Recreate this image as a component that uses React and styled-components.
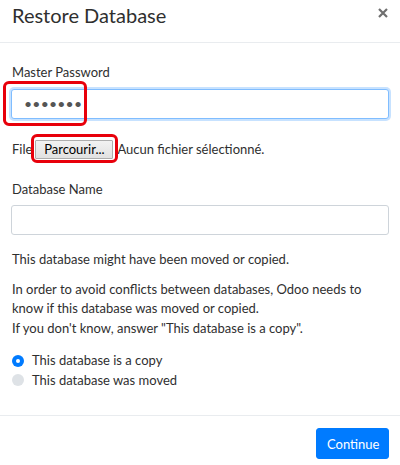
import React from "react";
import styled, { createGlobalStyle } from "styled-components";

const Global = createGlobalStyle`
  html, body { margin: 0; padding: 0; background: #fff; }
  body { font-family: Lato, "Noto Sans", sans-serif; color: #2f2f2f; font-size: 13px; line-height: 1.5; }
  * { box-sizing: border-box; }
`;

const Modal = styled.div`
  width: 400px;
  height: 465px;
  background: #fff;
  display: flex;
  flex-direction: column;
  overflow: hidden;
`;

const Header = styled.div`
  display: flex;
  align-items: flex-start;
  justify-content: space-between;
  padding: 0 12px;
  border-bottom: 1px solid #e9ecef;
  height: 43px;
`;

const Title = styled.h4`
  margin: 0;
  font-size: 20px;
  font-weight: 400;
  line-height: 31px;
  color: #2f2f2f;
`;

const Close = styled.button`
  border: 0;
  background: none;
  padding: 0;
  margin: 8px 0 0 0;
  width: 10px;
  height: 10px;
  display: flex;
  cursor: pointer;
`;

const Body = styled.div`
  padding: 20px 11px 0 11px;
  display: flex;
  flex-direction: column;
`;

const Label = styled.label`
  display: block;
  padding-left: 1px;
  margin-bottom: 6px;
`;

const FieldGroup = styled.div`
  margin-bottom: ${(p) => p.$mb || 12}px;
  position: relative;
`;

const Input = styled.input`
  display: block;
  width: 100%;
  height: 30px;
  padding: 0 ${(p) => (p.type === "password" ? "12px" : "10px")};
  font-family: inherit;
  font-size: ${(p) => (p.type === "password" ? "14px" : "13px")};
  color: #555;
  background: #fff;
  border: 1px solid ${(p) => (p.$focus ? "#80bdff" : "#ced4da")};
  border-radius: 3px;
  box-shadow: ${(p) => (p.$focus ? "0 0 0 2px rgba(0,123,255,.22)" : "none")};
  outline: none;
  letter-spacing: ${(p) => (p.type === "password" ? "0.2px" : "normal")};
`;

const Highlight = styled.div`
  position: absolute;
  border: 3px solid #e8000b;
  border-radius: 6px;
  pointer-events: none;
  left: ${(p) => p.$l}px;
  top: ${(p) => p.$t}px;
  width: ${(p) => p.$w}px;
  height: ${(p) => p.$h}px;
`;

const FileRow = styled.div`
  display: flex;
  align-items: center;
  padding-left: 1px;
  height: 20px;
  position: relative;
  margin-bottom: 20px;
`;

const FileButton = styled.span`
  display: inline-flex;
  align-items: center;
  justify-content: center;
  height: 19px;
  width: 78px;
  margin: 0 4px 0 3px;
  padding: 0 4px;
  font-family: inherit;
  font-size: 13px;
  color: #000;
  background: linear-gradient(#f2f2f2, #e1e1e1);
  border: 1px solid #adadad;
  border-radius: 1px;
`;

const Text = styled.p`
  margin: 0 0 ${(p) => p.$mb ?? 10}px 1px;
`;

const RadioList = styled.div`
  display: flex;
  flex-direction: column;
  padding-left: 1px;
`;

const RadioRow = styled.label`
  display: flex;
  align-items: center;
  gap: 8px;
  height: 19.5px;
`;

const RadioDot = styled.span`
  width: 12px;
  height: 12px;
  border-radius: 50%;
  flex: none;
  background: ${(p) => (p.$on ? "#007bff" : "#dee2e6")};
  display: flex;
  align-items: center;
  justify-content: center;
  &::after {
    content: "";
    width: 4px;
    height: 4px;
    border-radius: 50%;
    background: ${(p) => (p.$on ? "#fff" : "transparent")};
  }
`;

const Footer = styled.div`
  margin-top: auto;
  border-top: 1px solid #e9ecef;
  padding: 12px 11px 0 11px;
  display: flex;
  justify-content: flex-end;
  height: 50px;
`;

const Button = styled.button`
  height: 31px;
  width: 73px;
  padding: 0 10px;
  font-family: inherit;
  font-size: 13px;
  color: #fff;
  background: #007bff;
  border: 1px solid #007bff;
  border-radius: 3px;
`;

export default function App() {
  return (
    <>
      <Global />
      <Modal>
        <Header>
          <Title>Restore Database</Title>
          <Close aria-label="Close">
            <svg width="10" height="10" viewBox="0 0 10 10">
              <path d="M1 1 L9 9 M9 1 L1 9" stroke="#6f6f6f" strokeWidth="2.2" strokeLinecap="butt" />
            </svg>
          </Close>
        </Header>
        <Body>
          <Label>Master Password</Label>
          <FieldGroup $mb={21}>
            <Input type="password" defaultValue="1234567" $focus readOnly />
            <Highlight $l={-8} $t={-8} $w={84} $h={45} />
          </FieldGroup>
          <FileRow>
            File
            <FileButton>Parcourir...</FileButton>
            Aucun fichier sélectionné.
            <Highlight $l={20} $t={-6} $w={87} $h={29} />
          </FileRow>
          <Label>Database Name</Label>
          <FieldGroup $mb={15}>
            <Input type="text" />
          </FieldGroup>
          <Text>This database might have been moved or copied.</Text>
          <Text $mb={13}>
            In order to avoid conflicts between databases, Odoo needs to know if this database was moved or copied.
            <br />
            If you don't know, answer "This database is a copy".
          </Text>
          <RadioList>
            <RadioRow>
              <RadioDot $on />
              This database is a copy
            </RadioRow>
            <RadioRow>
              <RadioDot />
              This database was moved
            </RadioRow>
          </RadioList>
        </Body>
        <Footer>
          <Button>Continue</Button>
        </Footer>
      </Modal>
    </>
  );
}
